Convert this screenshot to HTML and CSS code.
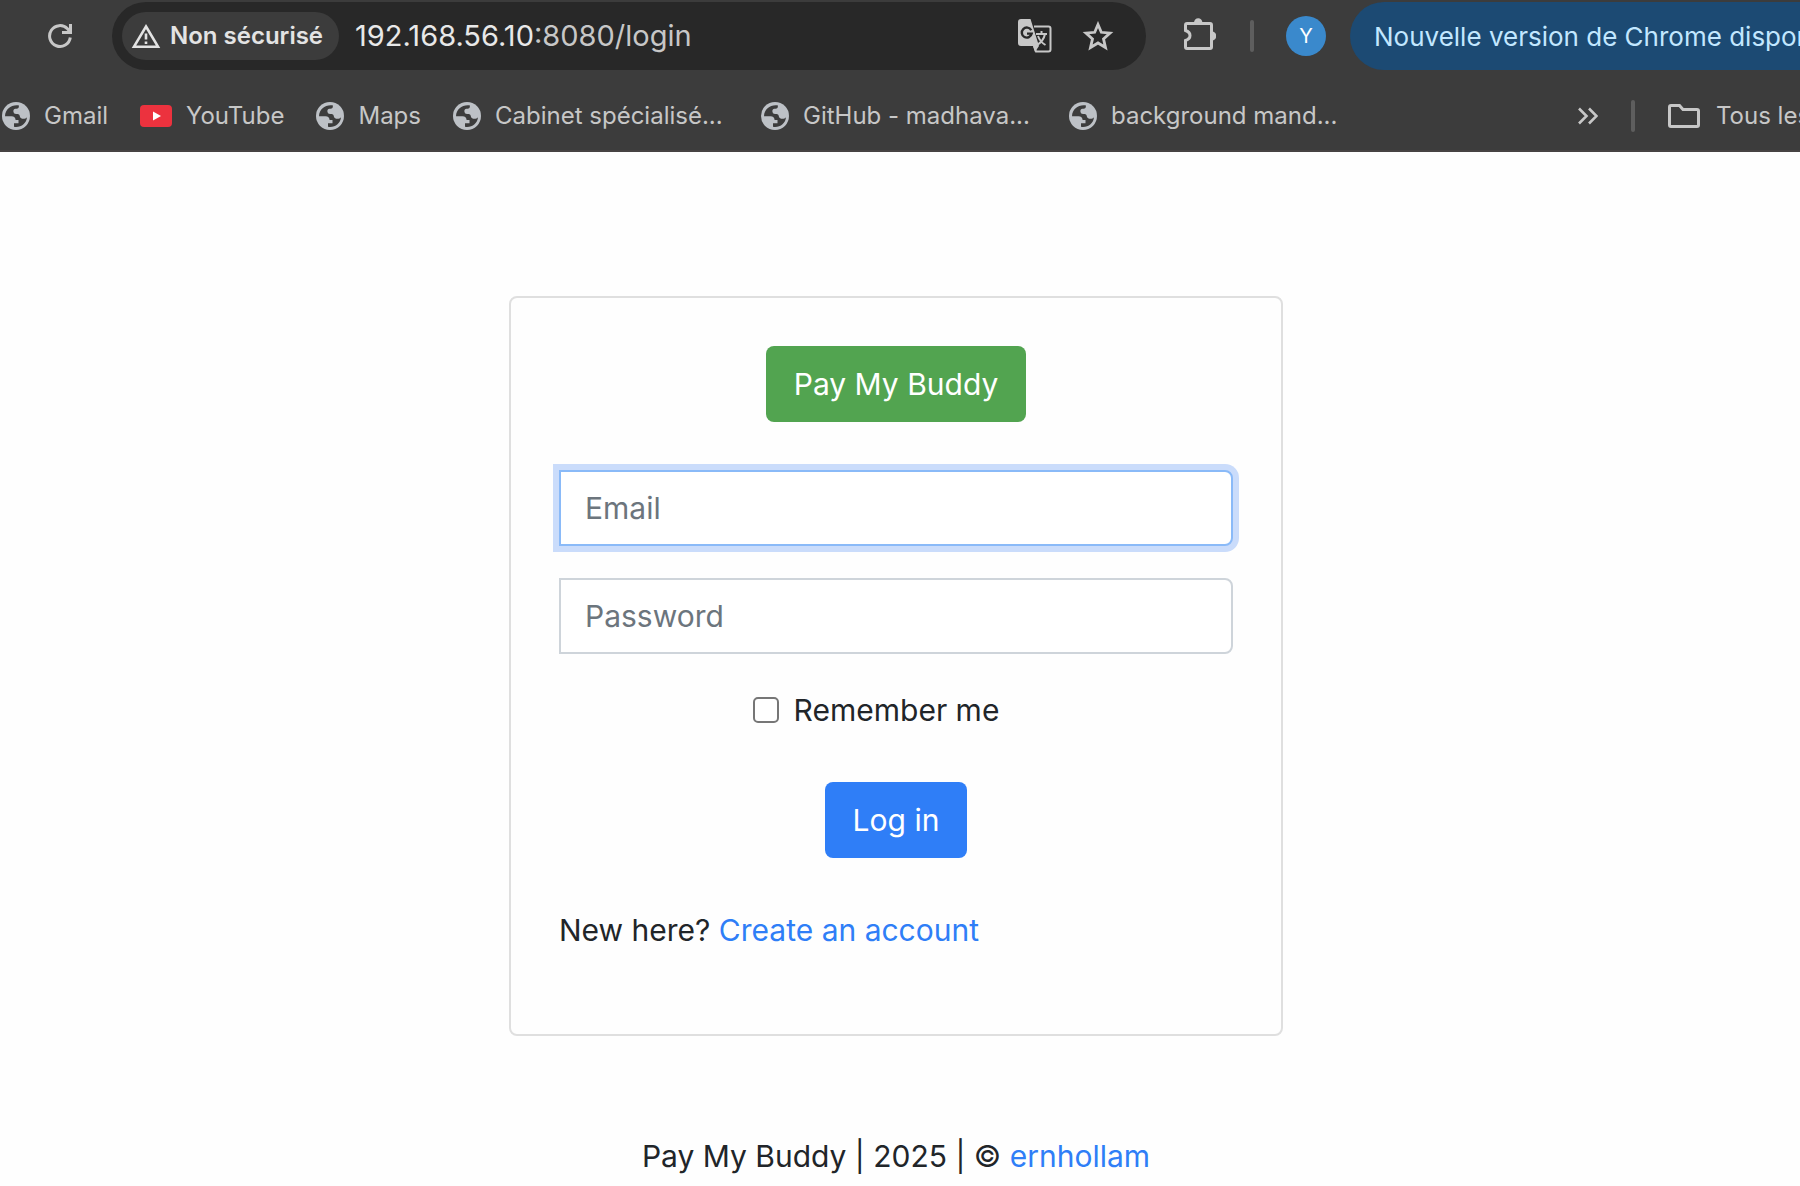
FILE: index.html
```html
<!DOCTYPE html>
<html lang="fr">
<head>
<meta charset="utf-8">
<meta name="viewport" content="width=device-width, initial-scale=1">
<title>Pay My Buddy</title>
<link rel="stylesheet" href="styles.css">
</head>
<body>
<svg width="0" height="0" class="sprite" aria-hidden="true">
  <symbol id="globe" viewBox="0 0 28 28">
    <circle cx="14" cy="14" r="14" fill="#bdc1c6"/>
    <path d="M17 3.4C10 2.200 3.200 6.500 3 14.200H9.500C12 14.200 13.600 15.600 13.600 18H16.500V21.200H12V24.800C18.500 26 24.500 21.500 25 15.200C23.500 17.200 20.500 17.300 18.800 16C17.600 15 18 13.200 17 12.400C15.500 11.600 12.800 12.400 12 11.200C11 9.500 11.200 7.800 12.400 7.100C13.600 6.400 15.600 7 16.400 5.900C16.900 5.200 16.800 4.300 17 3.400Z" fill="#3c3c3c"/>
  </symbol>
</svg>
<header class="browser">
  <div class="toolbar">
    <button class="icon-button reload" type="button" aria-label="Actualiser">
      <svg width="24" height="24" viewBox="0 0 24 24" fill="none" stroke="#c7c7c7" stroke-width="3"><path d="M22.300 13.500A10.400 10.400 0 1 1 19.500 4.800L22.500 8.200M22.500 0V8.500H14"/></svg>
    </button>
    <div class="omnibox">
      <button class="security" type="button">
        <svg width="30" height="26" viewBox="0 0 30 26"><path d="M15 3.500L27 23.700H3Z" fill="none" stroke="#e3e3e3" stroke-width="2.600"/><path d="M15 10.500V16.500M15 18.500V21" stroke="#e3e3e3" stroke-width="2.600"/></svg>
        <span>Non sécurisé</span>
      </button>
      <div class="address"><span class="host">192.168.56.10</span>:8080/login</div>
      <div class="omnibox-actions">
        <button class="icon-button" type="button" aria-label="Traduire">
          <svg width="34" height="34" viewBox="0 0 34 34"><path d="M16 7.500H30.500Q32.500 7.500 32.500 9.500V30.500Q32.500 32.500 30.500 32.500H18L16 27" fill="none" stroke="#c7c7c7" stroke-width="2"/><path d="M3 0H12.500L21 27L17 33L15 27H3Q0 27 0 24V3Q0 0 3 0Z" fill="#c7c7c7"/><path d="M13.200 11.200A5 5 0 1 0 13.700 14.600H9" fill="none" stroke="#282828" stroke-width="2.400"/><path d="M18 15H29M23.500 12V15M27 15C26 20 23 23.500 19 26M20 17C21.500 21 24 24 27.500 26" fill="none" stroke="#c7c7c7" stroke-width="2"/></svg>
        </button>
        <button class="icon-button" type="button" aria-label="Ajouter aux favoris">
          <svg width="32" height="30" viewBox="0 0 32 30"><path d="M16 3.500L19.300 11.300L28 12.100L21.500 17.900L23.500 26.500L16 22L8.500 26.500L10.500 17.900L4 12.100L12.700 11.300Z" fill="none" stroke="#c7c7c7" stroke-width="2.800"/></svg>
        </button>
      </div>
    </div>
    <div class="toolbar-actions">
      <button class="icon-button" type="button" aria-label="Extensions">
        <svg width="32" height="36" viewBox="0 0 32 36"><path d="M3 5.500H26Q27.500 5.500 27.500 7V29Q27.500 30.500 26 30.500H3Q1.500 30.500 1.500 29V22.500C7.500 20.500 7.500 14.500 1.500 12.500V7Q1.500 5.500 3 5.500Z" fill="none" stroke="#c7c7c7" stroke-width="3"/><path d="M10 5A4.200 4.800 0 0 1 18.400 5ZM28 13.500A4.200 4.500 0 0 1 28 22.500Z" fill="#c7c7c7"/></svg>
      </button>
      <span class="separator"></span>
      <button class="avatar" type="button">Y</button>
      <button class="update" type="button">Nouvelle version de Chrome disponible</button>
    </div>
  </div>
  <nav class="bookmarks">
    <a class="bookmark" href="#"><svg width="28" height="28"><use href="#globe"/></svg><span>Gmail</span></a>
    <a class="bookmark" href="#"><svg width="32" height="22" viewBox="0 0 32 22"><rect width="32" height="22" rx="4" fill="#ec323e"/><path d="M13 6.500V15.500L21 11Z" fill="#fff"/></svg><span>YouTube</span></a>
    <a class="bookmark" href="#"><svg width="28" height="28"><use href="#globe"/></svg><span>Maps</span></a>
    <a class="bookmark" href="#"><svg width="28" height="28"><use href="#globe"/></svg><span class="long">Cabinet spécialisé...</span></a>
    <a class="bookmark" href="#"><svg width="28" height="28"><use href="#globe"/></svg><span class="long">GitHub - madhava...</span></a>
    <a class="bookmark" href="#"><svg width="28" height="28"><use href="#globe"/></svg><span class="long">background mand...</span></a>
    <div class="bookmarks-end">
      <button class="icon-button" type="button" aria-label="Plus de favoris">
        <svg width="20" height="18" viewBox="0 0 20 18" fill="none" stroke="#c7c7c7" stroke-width="2.600"><path d="M1 1.500L8.500 9L1 16.500M11 1.500L18.500 9L11 16.500"/></svg>
      </button>
      <span class="separator"></span>
      <button class="all-bookmarks" type="button">
        <svg width="32" height="24" viewBox="0 0 32 24"><path d="M3 1.500H11.500L15 5.500H29Q30.500 5.500 30.500 7V21Q30.500 22.500 29 22.500H3Q1.500 22.500 1.500 21V3Q1.500 1.500 3 1.500Z" fill="none" stroke="#c7c7c7" stroke-width="3"/></svg>
        <span>Tous les favoris</span>
      </button>
    </div>
  </nav>
</header>
<div class="page" lang="en">
  <main class="card">
    <a class="button brand" href="#">Pay My Buddy</a>
    <form class="login">
      <input class="field field-active" type="email" placeholder="Email" aria-label="Email">
      <input class="field" type="password" placeholder="Password" aria-label="Password">
      <label class="remember"><input type="checkbox"><span>Remember me</span></label>
      <button class="button submit" type="submit">Log in</button>
    </form>
    <p class="signup">New here? <a href="#">Create an account</a></p>
  </main>
  <footer>Pay My Buddy | 2025 | © <a href="#">ernhollam</a></footer>
</div>
</body>
</html>
```

FILE: styles.css
```css
* { box-sizing: border-box; }

body {
  margin: 0;
  background: #fefefe;
  color: #212529;
  font-family: Inter, "Liberation Sans", sans-serif;
  font-size: 30px;
  line-height: 48px;
}

a { color: #2f7ef7; text-decoration: none; }
button, input { font: inherit; }
svg { display: block; flex: none; }
.sprite { position: absolute; }

/* Browser bar */
.browser {
  background: #3c3c3c;
  border-bottom: 2px solid #474343;
  color: #c7c7c7;
  font-size: 24px;
  line-height: 32px;
  white-space: nowrap;
  overflow: hidden;
}

.browser button {
  border: 0;
  padding: 0;
  background: none;
  color: inherit;
}

.toolbar {
  display: flex;
  align-items: center;
  height: 70px;
  padding-top: 2px;
}

.browser .reload { margin: 0 40px 0 48px; }

.omnibox {
  flex: 1;
  display: flex;
  align-items: center;
  height: 68px;
  padding: 0 32px 0 10px;
  border-radius: 34px;
  background: #282828;
}

.browser .security {
  display: flex;
  align-items: center;
  gap: 9px;
  height: 48px;
  padding: 0 16px 0 9px;
  border-radius: 24px;
  background: #3c3c3c;
  color: #e3e3e3;
  font-weight: 600;
}

.address { flex: 1; padding-left: 16px; font-size: 29px; }
.host { color: #e8e8e8; }
.omnibox-actions { display: flex; align-items: center; gap: 30px; }

.toolbar-actions {
  display: flex;
  align-items: center;
  width: 654px;
  padding-left: 38px;
}

.separator {
  flex: none;
  width: 4px;
  height: 32px;
  border-radius: 2px;
  background: #5e5e5e;
}

.toolbar-actions .separator { margin: 0 32px 0 34px; }

.browser .avatar {
  flex: none;
  width: 40px;
  height: 40px;
  border-radius: 50%;
  background: #3a89cc;
  color: #fff;
  font-size: 20px;
}

.browser .update {
  flex: 1;
  min-width: 0;
  height: 68px;
  margin-left: 24px;
  padding: 2px 0 0 24px;
  border-radius: 34px 0 0 34px;
  background: #1c4a73;
  color: #c2e7ff;
  font-size: 26px;
  text-align: left;
  overflow: hidden;
}

.bookmarks {
  display: flex;
  align-items: center;
  gap: 32px;
  height: 80px;
  padding: 12px 0 0 2px;
}

.bookmark { display: flex; align-items: center; gap: 14px; color: inherit; }
.long { width: 234px; }

.bookmarks-end {
  display: flex;
  align-items: center;
  gap: 33px;
  width: 222px;
  margin-left: auto;
  overflow: hidden;
}

.browser .all-bookmarks { display: flex; align-items: center; gap: 16px; }

/* Login page */
.page {
  display: flex;
  flex-direction: column;
  align-items: center;
  gap: 96px;
  padding: 144px 8px 5px 0;
}

.card {
  display: flex;
  flex-direction: column;
  align-items: center;
  gap: 48px;
  width: 100%;
  max-width: 774px;
  padding: 48px 48px 80px;
  border: 2px solid #dfdfdf;
  border-radius: 8px;
}

.login {
  display: flex;
  flex-direction: column;
  align-items: center;
  gap: 32px;
  width: 100%;
}

.button {
  padding: 14px 28px;
  border: 0;
  border-radius: 8px;
  color: #fff;
}

.brand { background: #52a450; }
.submit { margin-top: 16px; background: #2f7ef7; }

.field {
  width: 100%;
  height: 76px;
  padding: 12px 24px;
  border: 2px solid #ced4da;
  border-radius: 0 8px 8px 0;
  background: #fff;
  color: #495057;
}

.field::placeholder { color: #6c757d; opacity: 1; }

.field-active {
  border-color: #8abaf8;
  box-shadow: 0 0 0 6px #cadcfb;
}

.remember {
  display: flex;
  align-items: center;
  gap: 15px;
  padding-right: 40px;
}

.remember input {
  appearance: none;
  width: 26px;
  height: 26px;
  margin: 0;
  border: 2px solid #767676;
  border-radius: 5px;
  background: #fff;
}

.signup { align-self: flex-start; margin: 0; }
```
